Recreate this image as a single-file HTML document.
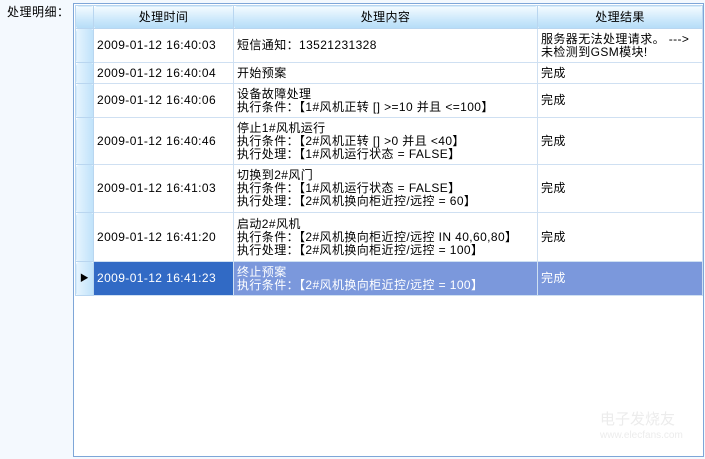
<!DOCTYPE html><html><head><style>
body{margin:0;width:705px;height:459px;background:#f4f9fe;font-family:"Liberation Sans","Noto Sans CJK SC",sans-serif;font-size:12px;color:#000;position:relative;overflow:hidden}
.lbl{position:absolute;left:7px;top:3px;letter-spacing:0.5px}
.grid{position:absolute;left:73px;top:3px;width:629px;height:452px;border:1px solid #7ea6d8;background:#fff}
table{border-collapse:collapse;position:absolute;left:1px;top:1px;table-layout:fixed;width:627px}
td,th{border:1px solid #cfe0f2;padding:0 3px;line-height:13px;font-weight:normal;white-space:nowrap;vertical-align:middle;letter-spacing:0.4px;overflow:hidden}
th{height:22px;background:linear-gradient(#f4fbff,#cce8fb 60%,#b5dcf7);border:1px solid #b9d6f0;text-align:center;border-radius:3px}
td.rh{padding:0;background:linear-gradient(90deg,#e6f4fe,#bfe2fa);border:1px solid #b9d6f0;border-radius:3px}
tr.sel td{background:#316ac5;color:#fff}
tr.sel td.c{background:#7b98dc}
tr.sel td.r{background:#7b98dc}
tr.sel td.rh{background:linear-gradient(90deg,#e6f4fe,#bfe2fa);color:#000;font-size:9px;text-align:center}
.wm{position:absolute;left:600px;top:412px;color:#ececec;font-size:15px;line-height:16px}
.wm small{font-size:10px;display:block}
</style></head><body>
<div class="lbl">处理明细：</div>
<div class="grid"><table>
<colgroup><col style="width:18px"><col style="width:140px"><col style="width:304px"><col style="width:165px"></colgroup>
<tr><th style="padding:0"></th><th>处理时间</th><th>处理内容</th><th>处理结果</th></tr>
<tr style="height:34px"><td class="rh"></td><td>2009-01-12 16:40:03</td><td>短信通知：13521231328</td><td>服务器无法处理请求。 ---&gt;<br>未检测到GSM模块!</td></tr>
<tr style="height:21px"><td class="rh"></td><td>2009-01-12 16:40:04</td><td>开始预案</td><td>完成</td></tr>
<tr style="height:34px"><td class="rh"></td><td>2009-01-12 16:40:06</td><td>设备故障处理<br>执行条件：【1#风机正转 [] &gt;=10 并且 &lt;=100】</td><td>完成</td></tr>
<tr style="height:47px"><td class="rh"></td><td>2009-01-12 16:40:46</td><td>停止1#风机运行<br>执行条件：【2#风机正转 [] &gt;0 并且 &lt;40】<br>执行处理：【1#风机运行状态 = FALSE】</td><td>完成</td></tr>
<tr style="height:48px"><td class="rh"></td><td>2009-01-12 16:41:03</td><td>切换到2#风门<br>执行条件：【1#风机运行状态 = FALSE】<br>执行处理：【2#风机换向柜近控/远控 = 60】</td><td>完成</td></tr>
<tr style="height:49px"><td class="rh"></td><td>2009-01-12 16:41:20</td><td>启动2#风机<br>执行条件：【2#风机换向柜近控/远控 IN 40,60,80】<br>执行处理：【2#风机换向柜近控/远控 = 100】</td><td>完成</td></tr>
<tr class="sel" style="height:34px"><td class="rh">▶</td><td>2009-01-12 16:41:23</td><td class="c">终止预案<br>执行条件：【2#风机换向柜近控/远控 = 100】</td><td class="r">完成</td></tr>
</table></div>
<div class="wm">电子发烧友<small>www.elecfans.com</small></div>
</body></html>
